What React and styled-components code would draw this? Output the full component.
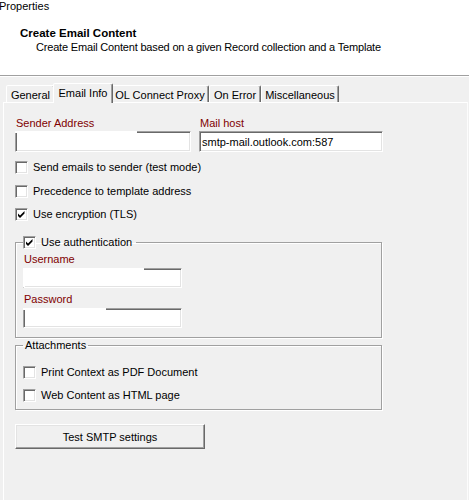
import React from 'react';
import styled, { createGlobalStyle } from 'styled-components';

const Global = createGlobalStyle`
  html, body { margin: 0; padding: 0; background: #f0f0f0; }
  body {
    font-family: "Liberation Sans", Arial, sans-serif;
    font-size: 11px;
    color: #000;
    overflow: hidden;
  }
  * { box-sizing: border-box; }
`;

const Window = styled.div`
  width: 469px;
  height: 500px;
  display: flex;
  flex-direction: column;
  overflow: hidden;
  background: #f0f0f0;
`;

const Header = styled.header`
  background: #fff;
  height: 76px;
  border-bottom: 1px solid #a0a0a0;
  box-shadow: 0 1px 0 #fff;
  display: flex;
  flex-direction: column;
  line-height: 13px;
`;

const Caption = styled.div`
  margin-left: -1px;
`;

const Title = styled.div`
  font-weight: bold;
  font-size: 11.5px;
  margin: 14px 0 0 20px;
`;

const Subtitle = styled.div`
  margin: 1px 0 0 36px;
  letter-spacing: -0.18px;
`;

const TabStrip = styled.div`
  display: flex;
  align-items: flex-end;
  height: 19px;
  margin-top: 7px;
  padding-left: 6px;
`;

const Tab = styled.div`
  position: relative;
  z-index: ${p => (p.$active ? 2 : 1)};
  width: ${p => p.$w + (p.$active ? 4 : 0)}px;
  height: ${p => (p.$active ? 20 : 17)}px;
  margin: 0 ${p => (p.$active ? -2 : 0)}px ${p => (p.$active ? -1 : 0)}px;
  padding-top: 3px;
  text-align: center;
  line-height: 13px;
  white-space: nowrap;
  background: #f0f0f0;
  border: 1px solid;
  border-bottom: none;
  border-color: #fff #696969 transparent #fff;
  border-radius: 2px 2px 0 0;
  box-shadow: inset -1px 0 #a0a0a0;
`;

const Panel = styled.div`
  flex: 1;
  margin: 0 1px 0 3px;
  border: 1px solid;
  border-bottom: none;
  border-color: #fff #fcfcfc transparent #fff;
  padding: 14px 0 0 11px;
  display: flex;
  flex-direction: column;
  align-items: flex-start;
`;

const FieldRow = styled.div`
  display: flex;
  gap: 8px;
`;

const FieldCol = styled.div`
  display: flex;
  flex-direction: column;
  gap: ${p => p.$gap ?? 1}px;
`;

const Label = styled.div`
  color: #800000;
  line-height: 13px;
  padding-left: 1px;
  margin-top: ${p => p.$mt ?? 0}px;
`;

const Box = styled.div`
  position: relative;
  width: ${p => p.$w}px;
  height: ${p => p.$h ?? 21}px;
  background: #fff;
  border: 1px solid;
  border-color: #a0a0a0 #fff #fff #a0a0a0;
  box-shadow: inset 1px 1px #696969, inset -1px -1px #e3e3e3;

  &::before {
    content: "";
    position: absolute;
    left: -1px;
    top: -1px;
    width: ${p => p.$coverTop ?? 0}px;
    height: 2px;
    background: #fff;
  }
  &::after {
    content: "";
    position: absolute;
    left: -1px;
    top: -1px;
    width: 2px;
    height: ${p => (p.$coverLeft ? 'calc(100% + 1px)' : '0')};
    background: #fff;
  }
`;

const Field = styled.input`
  display: block;
  width: 100%;
  height: 100%;
  border: none;
  outline: none;
  background: transparent;
  padding: 0 0 0 2px;
  margin: 0;
  font: inherit;
  font-size: 11px;
  color: #000;
`;

const CheckRow = styled.label`
  display: flex;
  align-items: center;
  gap: 5px;
  height: 13px;
  line-height: 13px;
  white-space: nowrap;
  margin-top: ${p => p.$mt ?? 0}px;
`;

const CheckBox = styled.span`
  flex: none;
  position: relative;
  width: 13px;
  height: 13px;
  background: #fff;
  border: 1px solid;
  border-color: #a0a0a0 #fff #fff #a0a0a0;
  box-shadow: inset 1px 1px #696969, inset -1px -1px #e3e3e3;
  svg { position: absolute; left: 0; top: 0; display: block; }
`;

const Group = styled.fieldset`
  width: 367px;
  margin: ${p => p.$mt ?? 0}px 0 0 0;
  padding: ${p => p.$pt ?? 0}px 7px ${p => p.$pb ?? 0}px 7px;
  border: 1px solid #a0a0a0;
  box-shadow: inset 1px 1px #fff, 1px 1px #fff;
  min-inline-size: 0;
  display: flex;
  flex-direction: column;
  align-items: flex-start;
`;

const Legend = styled.legend`
  padding: 0 ${p => p.$pr ?? 2}px 0 ${p => p.$pl ?? 2}px;
  line-height: 13px;
  height: 13px;
  display: flex;
  align-items: center;
  gap: 5px;
`;

const Button = styled.button`
  margin-top: ${p => p.$mt ?? 0}px;
  width: 190px;
  height: 25px;
  padding: 0;
  font: inherit;
  font-size: 11px;
  color: #000;
  background: #f0f0f0;
  border: 1px solid;
  border-color: #fff #696969 #696969 #fff;
  box-shadow: inset -1px -1px #a0a0a0, inset 1px 1px #e3e3e3;
`;

const Check = ({ checked }) => (
  <CheckBox>
    {checked && (
      <svg width="11" height="11" viewBox="0 0 11 11">
        <path d="M2 4.5 L4 6.5 L8.5 2 L8.5 4.5 L4 9 L2 7 Z" fill="#000" />
      </svg>
    )}
  </CheckBox>
);

const tabs = [
  { label: 'General', w: 49 },
  { label: 'Email Info', w: 56, active: true },
  { label: 'OL Connect Proxy', w: 98 },
  { label: 'On Error', w: 52 },
  { label: 'Miscellaneous', w: 78 },
];

export default function App() {
  return (
    <>
      <Global />
      <Window>
        <Header>
          <Caption>Properties</Caption>
          <Title>Create Email Content</Title>
          <Subtitle>Create Email Content based on a given Record collection and a Template</Subtitle>
        </Header>

        <TabStrip>
          {tabs.map(t => (
            <Tab key={t.label} $w={t.w} $active={t.active}>{t.label}</Tab>
          ))}
        </TabStrip>

        <Panel>
          <FieldRow>
            <FieldCol>
              <Label>Sender Address</Label>
              <Box $w={176} $coverTop={122}><Field readOnly defaultValue="" /></Box>
            </FieldCol>
            <FieldCol>
              <Label>Mail host</Label>
              <Box $w={184}><Field readOnly defaultValue="smtp-mail.outlook.com:587" /></Box>
            </FieldCol>
          </FieldRow>

          <CheckRow $mt={9}><Check />Send emails to sender (test mode)</CheckRow>
          <CheckRow $mt={11}><Check />Precedence to template address</CheckRow>
          <CheckRow $mt={10}><Check checked />Use encryption (TLS)</CheckRow>

          <Group $mt={15} $pt={4} $pb={9}>
            <Legend $pl={0} $pr={4}><Check checked />Use authentication</Legend>
            <FieldCol $gap={2}>
              <Label>Username</Label>
              <Box $w={159} $h={20} $coverTop={121} $coverLeft><Field readOnly defaultValue="" /></Box>
              <Label $mt={3}>Password</Label>
              <Box $w={159} $h={20} $coverTop={83}><Field readOnly type="password" defaultValue="" /></Box>
            </FieldCol>
          </Group>

          <Group $mt={1} $pt={14} $pb={7}>
            <Legend $pl={2} $pr={2}>Attachments</Legend>
            <CheckRow><Check />Print Context as PDF Document</CheckRow>
            <CheckRow $mt={10}><Check />Web Content as HTML page</CheckRow>
          </Group>

          <Button $mt={14}>Test SMTP settings</Button>
        </Panel>
      </Window>
    </>
  );
}
